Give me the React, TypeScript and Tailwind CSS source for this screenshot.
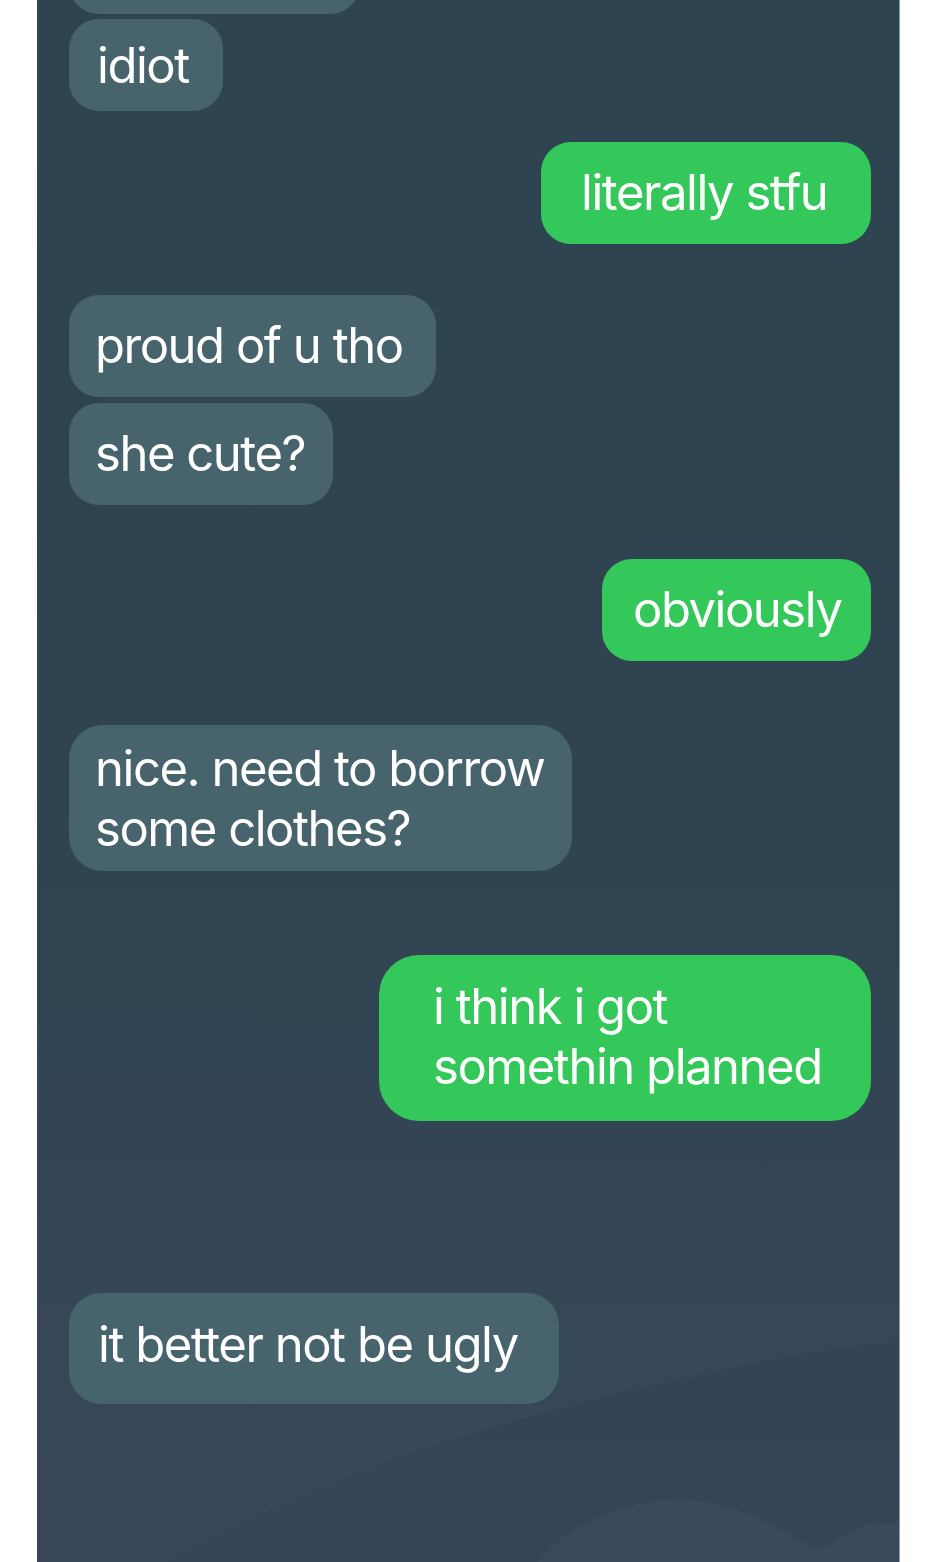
import React from "react";

type Msg = {
    text: string[];
    me?: boolean;
    box: string;
};

// spacing between bubbles is uneven in the original, so each one carries its own margin
const messages: Msg[] = [
    { text: ["idiot"], box: "mt-[5px] w-[154px] pl-[28px] pt-[17px] pb-[15px] rounded-[30px]" },
    { text: ["literally stfu"], me: true, box: "mt-[31px] w-[330px] pl-[40px] pt-[21px] pb-[21px] rounded-[30px]" },
    { text: ["proud of u tho"], box: "mt-[51px] w-[367px] pl-[26px] pt-[21px] pb-[21px] rounded-[30px]" },
    { text: ["she cute?"], box: "mt-[6px] w-[264px] pl-[26px] pt-[21px] pb-[21px] rounded-[30px]" },
    { text: ["obviously"], me: true, box: "mt-[54px] w-[269px] pl-[31px] pt-[21px] pb-[21px] rounded-[30px]" },
    { text: ["nice. need to borrow", "some clothes?"], box: "mt-[64px] w-[503px] pl-[26px] pt-[14px] pb-[12px] rounded-[34px]" },
    { text: ["i think i got", "somethin planned"], me: true, box: "mt-[84px] w-[492px] pl-[54px] pt-[22px] pb-[24px] rounded-[40px]" },
    { text: ["it better not be ugly"], box: "mt-[172px] w-[490px] pl-[29px] pt-[22px] pb-[29px] rounded-[32px]" },
];

function Bubble({ m }: { m: Msg }) {
    return (
        <div className={`flex ${m.me ? "justify-end" : "justify-start"}`}>
            <div
                className={`${m.box} ${m.me ? "bg-[#34c759]" : "bg-[#47636b]"} text-white text-[49px] leading-[60px] tracking-[-0.03em] whitespace-nowrap [font-variant-ligatures:none]`}
            >
                {m.text.map((line, i) => (
                    <div key={i}>{line}</div>
                ))}
            </div>
        </div>
    );
}

export default function App() {
    return (
        <div className="h-[1562px] bg-white overflow-hidden" style={{ fontFamily: "Inter, 'Noto Sans', sans-serif" }}>
            <div className="relative ml-[37px] w-[863px] h-full overflow-hidden bg-gradient-to-b from-[#2e4450] via-[#2f4350] to-[#38485a] border-r border-[#8a9aa6]">
                {/* faint hills at the bottom */}
                <svg className="absolute left-0 bottom-0" width="862" height="260" viewBox="0 0 862 260">
                    <path d="M130 260 C 330 150, 560 90, 780 50 L 862 40 L 862 260 Z" fill="#2f4150" opacity="0.35" />
                    <path d="M130 260 C 330 150, 560 90, 780 50 L 862 40 L 862 0 L 0 0 L 0 260 Z" fill="#3a4b5e" opacity="0.15" />
                    <path d="M500 260 C 540 215, 590 200, 640 198 C 700 198, 740 225, 770 243 C 780 250, 790 245, 800 238 C 815 224, 835 220, 862 221 L 862 260 Z" fill="#3a4a5c" />
                </svg>

                <div className="relative px-[28px] pl-[32px]">
                    <div className="flex justify-start">
                        <div className="-mt-[88px] h-[102px] w-[291px] rounded-[30px] bg-[#47636b]" />
                    </div>
                    {messages.map((m, i) => (
                        <Bubble key={i} m={m} />
                    ))}
                </div>
            </div>
        </div>
    );
}
